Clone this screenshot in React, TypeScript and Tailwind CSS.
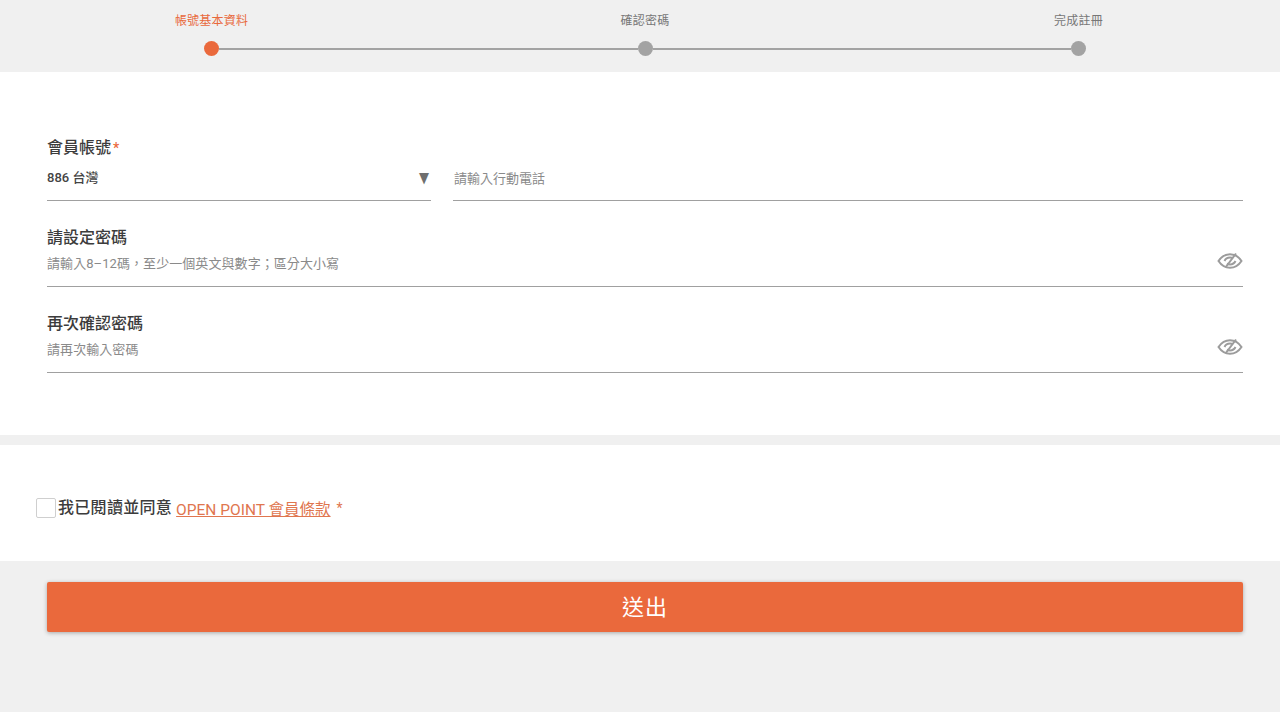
const FONT = "font-['Roboto','Noto_Sans_CJK_TC',sans-serif]";

const Step = ({ label, active }: { label: string; active?: boolean }) => (
  <div className="flex w-[15px] shrink-0 flex-col items-center">
    <span
      className={`whitespace-nowrap text-[12px] leading-[16px] tracking-[0.2px] ${
        active ? "text-[#e8693c]" : "text-[#777777]"
      }`}
    >
      {label}
    </span>
    <div
      className={`mt-[12px] h-[15px] w-[15px] rounded-full ${
        active ? "bg-[#ea693c]" : "bg-[#a3a3a3]"
      }`}
    />
  </div>
);

const Line = () => <div className="mb-[6px] h-[2px] flex-1 bg-[#a3a3a3]" />;

const EyeSlash = () => (
  <svg width="26" height="20" viewBox="0 0 26 20" fill="none" stroke="#9c9c9c" strokeWidth="2">
    <path d="M1.5 10C4.5 5.5 8.5 3.2 13 3.2S21.5 5.5 24.5 10C21.5 14.5 17.5 16.8 13 16.8S4.5 14.5 1.5 10Z" />
    <path d="M7.5 10C8.5 7.8 10.5 6.6 13 6.6c1.2 0 2.2.3 3.1.8M18.5 10c-1 2.2-3 3.4-5.500 3.400-1.200 0-2.200-.3-3.100-.8" />
    <path d="M8.500 16.500L19 2.500" />
  </svg>
);

const PasswordField = ({ label, hint }: { label: string; hint: string }) => (
  <div className="mb-[25px] border-b border-[#a0a0a0]">
    <div className="text-[16px] font-medium leading-[24px] text-[#3c3c3c]">{label}</div>
    <div className="mt-[2px] flex h-[34px] items-start justify-between">
      <span className="mt-[2px] text-[13px] leading-[20px] tracking-[0.07px] text-[#8a8a8a]">{hint}</span>
      <span className="mt-[-1px]">
        <EyeSlash />
      </span>
    </div>
  </div>
);

export default function App() {
  return (
    <div className={`${FONT} h-[712px] w-[1280px] overflow-hidden bg-[#f0f0f0]`}>
      <div className="flex h-[72px] items-end pb-[16px] pl-[204px] pr-[194px]">
        <Step label="帳號基本資料" active />
        <Line />
        <Step label="確認密碼" />
        <Line />
        <Step label="完成註冊" />
      </div>

      <div className="h-[363px] bg-white pl-[47px] pr-[37px] pt-[64px]">
        <div className="flex items-start text-[16px] font-medium leading-[24px] text-[#3c3c3c]">
          會員帳號<span className="ml-[2px] text-[14px] text-[#ea693c]">*</span>
        </div>
        <div className="mb-[25px] mt-[2px] flex gap-[22px]">
          <div className="flex h-[39px] w-[384px] items-start justify-between border-b border-[#a0a0a0]">
            <span className="mt-[6px] text-[13px] font-medium leading-[20px] text-[#444444]">886 台灣</span>
            <span className="mt-[6px] scale-x-[0.75] text-[14px] leading-[20px] text-[#6f6f6f]">▼</span>
          </div>
          <div className="h-[39px] flex-1 border-b border-[#a0a0a0]">
            <span className="ml-[1px] mt-[7px] block text-[13px] leading-[20px] text-[#8a8a8a]">請輸入行動電話</span>
          </div>
        </div>
        <PasswordField label="請設定密碼" hint="請輸入8–12碼，至少一個英文與數字；區分大小寫" />
        <PasswordField label="再次確認密碼" hint="請再次輸入密碼" />
      </div>

      <div className="mt-[10px] flex h-[116px] items-center bg-white pl-[36px] pt-[10px]">
        <div className="h-[20px] w-[20px] rounded-[2px] border border-[#cfcfcf] bg-white" />
        <span className="ml-[2px] text-[16px] font-medium leading-[22px] tracking-[0.3px] text-[#3c3c3c]">我已閱讀並同意</span>
        <a className="ml-[4px] mt-[4px] text-[15.5px] leading-[22px] text-[#e0764f] underline">OPEN POINT 會員條款</a>
        <span className="ml-[6px] text-[14px] leading-[22px] text-[#e0764f]">*</span>
      </div>

      <div className="pl-[47px] pr-[37px] pt-[21px]">
        <button className="h-[50px] w-full rounded-[2px] bg-[#ea693c] text-[22px] tracking-[1px] text-white shadow-[0_1px_4px_rgba(0,0,0,0.3)]">
          送出
        </button>
      </div>
    </div>
  );
}
